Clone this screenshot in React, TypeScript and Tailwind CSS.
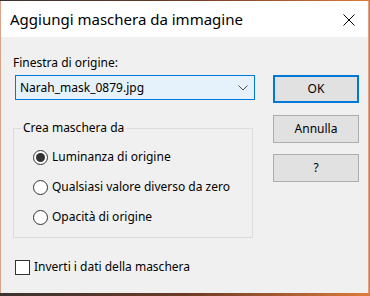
import { useState } from 'react';

const FONT = { fontFamily: '"Segoe UI", "Noto Sans", "Liberation Sans", sans-serif' };

const OPTIONS = ['Luminanza di origine', 'Qualsiasi valore diverso da zero', 'Opacità di origine'];

function Radio({ checked }: { checked: boolean }) {
  return (
    <span className="w-[15px] h-[15px] rounded-full border border-[#333333] bg-white flex items-center justify-center shrink-0">
      {checked && <span className="w-[9px] h-[9px] rounded-full bg-[#333333]" />}
    </span>
  );
}

export default function App() {
  const [choice, setChoice] = useState(0);
  const [invert, setInvert] = useState(false);

  return (
    <div
      className="w-[370px] h-[296px] overflow-hidden bg-gradient-to-r from-[#3a3230] via-[#6b3a26] to-[#e07a3a] text-black"
      style={FONT}
    >
      <div className="mt-[1px] w-[369px] h-[292px] flex flex-col border-x border-[#dba387]">
        {/* Title bar */}
        <div className="h-[36px] bg-white flex items-center justify-between pl-[9px] pr-[13px] shrink-0">
          <span className="text-[15px] leading-[20px] text-black">Aggiungi maschera da immagine</span>
          <svg width="12" height="12" viewBox="0 0 12 12" className="mt-[2px]" aria-label="Chiudi">
            <path d="M0.5 0.5 L11.5 11.5 M11.5 0.5 L0.5 11.5" stroke="#000" strokeWidth="1" />
          </svg>
        </div>

        {/* Body */}
        <div className="flex-1 bg-[#f0f0f0] flex pl-[12px] pr-[9px] pt-[18px] text-[12px]">
          <div className="w-[240px] flex flex-col">
            <label className="leading-[16px]">Finestra di origine:</label>
            <div className="mt-[4px] ml-[2px] h-[25px] w-[240px] border border-[#0078d7] bg-[#e5f1fb] flex items-center justify-between pl-[4px] pr-[6px]">
              <span className="leading-[16px]">Narah_mask_0879.jpg</span>
              <svg width="10" height="6" viewBox="0 0 10 6">
                <path d="M0.5 0.5 L5 5 L9.5 0.5" fill="none" stroke="#505050" strokeWidth="1" />
              </svg>
            </div>

            <fieldset className="mt-[20px] border border-[#dcdcdc] pt-[6px] pb-[5px]">
              <legend className="ml-[7px] px-[2px] leading-[16px]">Crea maschera da</legend>
              {OPTIONS.map((opt, i) => (
                <div
                  key={opt}
                  className="h-[30px] pl-[19px] flex items-center gap-[4px] cursor-default"
                  onClick={() => setChoice(i)}
                >
                  <Radio checked={choice === i} />
                  <span className="leading-[16px]">{opt}</span>
                </div>
              ))}
            </fieldset>

            <div
              className="mt-[21px] ml-[2px] h-[16px] flex items-center gap-[4px] cursor-default"
              onClick={() => setInvert(!invert)}
            >
              <span className="w-[15px] h-[15px] border border-[#333333] bg-white flex items-center justify-center text-[11px]">
                {invert ? '✓' : ''}
              </span>
              <span className="leading-[16px]">Inverti i dati della maschera</span>
            </div>
          </div>

          <div className="ml-auto w-[86px] flex flex-col pt-[20px]">
            <button className="h-[28px] border-2 border-[#0078d7] bg-[#e1e1e1] leading-[16px]">OK</button>
            <button className="mt-[12px] h-[28px] border border-[#adadad] bg-[#e1e1e1] leading-[16px]">Annulla</button>
            <button className="mt-[11px] h-[28px] border border-[#adadad] bg-[#e1e1e1] leading-[16px]">?</button>
          </div>
        </div>
      </div>
    </div>
  );
}
